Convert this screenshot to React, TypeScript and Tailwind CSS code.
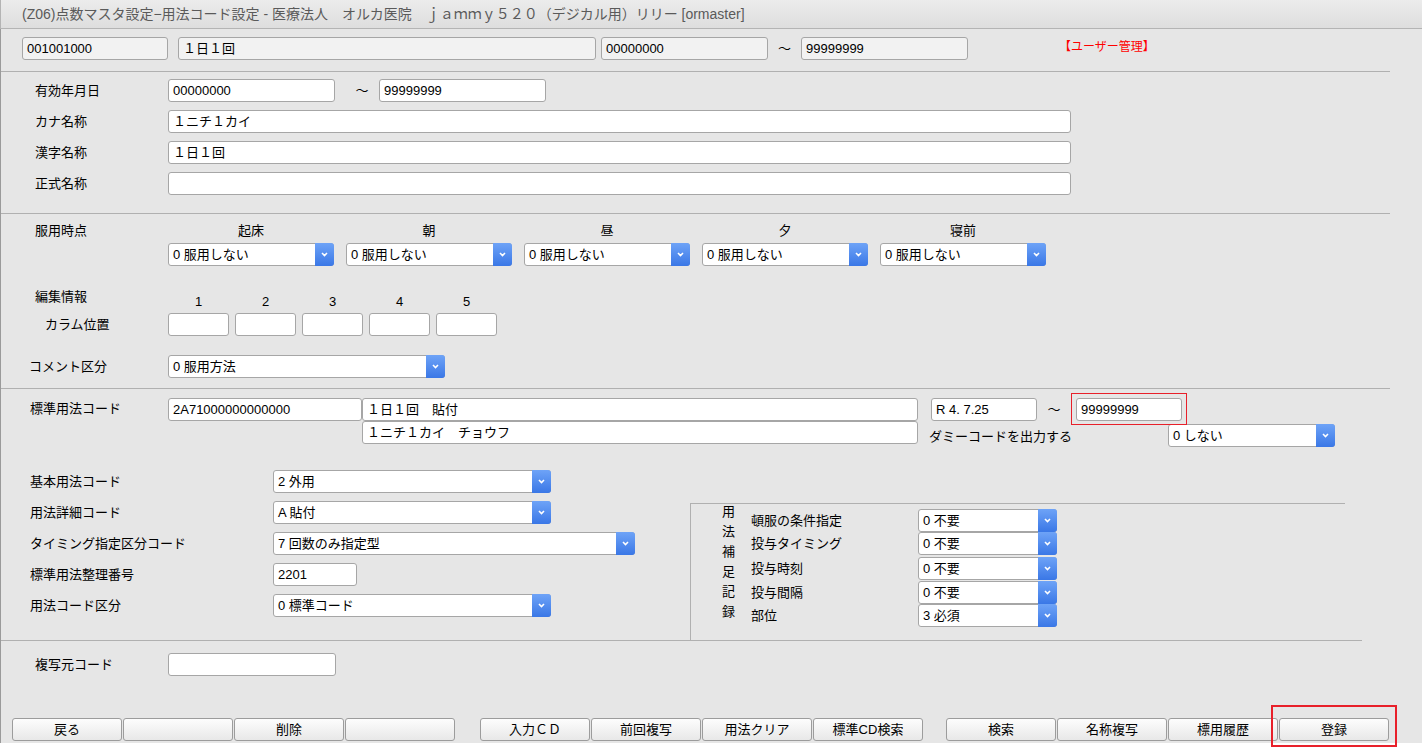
import React from 'react';

const FONT = "font-['Liberation_Sans','Noto_Sans_CJK_JP',sans-serif]";

const Box = ({ w, v = '', ro = false }: { w: string; v?: string; ro?: boolean }) => (
  <div
    className={`h-[23px] ${w} shrink-0 overflow-hidden whitespace-nowrap rounded-[3px] border border-[#a6a6a6] ${
      ro ? 'bg-[#f2f2f2]' : 'bg-white'
    } px-[4px] text-[13px] leading-[21px] text-black`}
  >
    {v}
  </div>
);

const Select = ({ w, v }: { w: string; v: string }) => (
  <div className={`flex h-[23px] ${w} shrink-0 rounded-[3px] border border-[#a6a6a6] bg-white`}>
    <div className="flex-1 overflow-hidden whitespace-nowrap px-[4px] text-[13px] leading-[21px] text-black">{v}</div>
    <div className="-my-px -mr-px flex w-[19px] items-center justify-center rounded-r-[3px] bg-linear-to-b from-[#6ea3f7] to-[#3a77e6]">
      <svg width="7" height="5" viewBox="0 0 7 5">
        <path d="M1 1l2.5 2.5L6 1" stroke="#fff" strokeWidth="1.6" fill="none" />
      </svg>
    </div>
  </div>
);

const Btn = ({ label = '' }: { label?: string }) => (
  <div className="h-[23px] w-[110px] rounded-[3px] border border-[#9c9c9c] bg-linear-to-b from-[#fdfdfd] to-[#e8e8e8] text-center text-[13px] leading-[21px] text-black">
    {label}
  </div>
);

const timings = ['起床', '朝', '昼', '夕', '寝前'];

const hoken = [
  { label: '頓服の条件指定', v: '0 不要', mt: 'mt-0' },
  { label: '投与タイミング', v: '0 不要', mt: 'mt-0' },
  { label: '投与時刻', v: '0 不要', mt: 'mt-[2px]' },
  { label: '投与間隔', v: '0 不要', mt: 'mt-[1px]' },
  { label: '部位', v: '3 必須', mt: 'mt-0' },
];

export default function App() {
  return (
    <div className={`h-[752px] w-[1422px] overflow-hidden bg-white text-[13px] text-black ${FONT}`}>
      {/* title bar */}
      <div className="h-[29px] border-b border-l border-[#b4b4b4] bg-linear-to-b from-[#ececec] to-[#dedede] pl-[21px] text-[14px] leading-[28px] text-[#5a5a5a]">
        (Z06)点数マスタ設定−用法コード設定 - 医療法人　オルカ医院　ｊａｍｍｙ５２０（デジカル用）リリー [ormaster]
      </div>

      <div className="h-[714px] border-l border-[#9a9a9a] bg-[#e6e6e6]">
        {/* header row */}
        <div className="flex h-[43px] w-[1389px] items-start border-b border-[#b0b0b0] pl-[21px] pt-[8px]">
          <Box w="w-[146px]" v="001001000" ro />
          <div className="ml-[10px]">
            <Box w="w-[418px]" v="１日１回" ro />
          </div>
          <div className="ml-[5px]">
            <Box w="w-[167px]" v="00000000" ro />
          </div>
          <span className="w-[33px] text-center leading-[23px]">～</span>
          <Box w="w-[167px]" v="99999999" ro />
          <span className="ml-[91px] text-[12px] leading-[20px] text-[#ff0000]">【ユーザー管理】</span>
        </div>

        {/* names */}
        <div className="flex h-[142px] w-[1389px] flex-col gap-[8px] border-b border-[#b0b0b0] pt-[7px]">
          <div className="flex items-center">
            <span className="w-[167px] pl-[34px]">有効年月日</span>
            <Box w="w-[167px]" v="00000000" />
            <span className="w-[44px] pl-[10px] text-center">～</span>
            <Box w="w-[167px]" v="99999999" />
          </div>
          <div className="flex items-center">
            <span className="w-[167px] pl-[34px]">カナ名称</span>
            <Box w="w-[903px]" v="１ニチ１カイ" />
          </div>
          <div className="flex items-center">
            <span className="w-[167px] pl-[34px]">漢字名称</span>
            <Box w="w-[903px]" v="１日１回" />
          </div>
          <div className="flex items-center">
            <span className="w-[167px] pl-[34px]">正式名称</span>
            <Box w="w-[903px]" />
          </div>
        </div>

        {/* timing / edit info / comment */}
        <div className="flex h-[175px] w-[1389px] flex-col border-b border-[#b0b0b0] pt-[9px]">
          <div className="flex items-start">
            <span className="w-[167px] pl-[34px] leading-[16px]">服用時点</span>
            <div className="flex gap-[12px]">
              {timings.map((t) => (
                <div key={t} className="flex w-[166px] flex-col items-center">
                  <span className="leading-[16px]">{t}</span>
                  <div className="mt-[4px] w-full">
                    <Select w="w-full" v="0 服用しない" />
                  </div>
                </div>
              ))}
            </div>
          </div>

          <div className="mt-[23px] flex items-start">
            <span className="w-[167px] pl-[34px] leading-[16px]">編集情報</span>
            <div className="flex gap-[6px] pt-[5px]">
              {[1, 2, 3, 4, 5].map((n) => (
                <span key={n} className="w-[61px] text-center leading-[16px]">
                  {n}
                </span>
              ))}
            </div>
          </div>
          <div className="mt-[3px] flex items-center">
            <span className="w-[167px] pl-[44px]">カラム位置</span>
            <div className="flex gap-[6px]">
              {[1, 2, 3, 4, 5].map((n) => (
                <Box key={n} w="w-[61px]" />
              ))}
            </div>
          </div>

          <div className="mt-[19px] flex items-center">
            <span className="w-[167px] pl-[28px]">コメント区分</span>
            <Select w="w-[277px]" v="0 服用方法" />
          </div>
        </div>

        {/* standard usage code */}
        <div className="flex h-[252px] w-[1361px] flex-col border-b border-[#b0b0b0] pt-[9px]">
          <div className="flex items-start">
            <span className="w-[167px] pl-[29px] leading-[21px]">標準用法コード</span>
            <Box w="w-[194px]" v="2A71000000000000" />
            <div className="flex w-[556px] flex-col">
              <Box w="w-full" v="１日１回　貼付" />
              <Box w="w-full" v="１ニチ１カイ　チョウフ" />
            </div>
            <div className="ml-[11px] flex flex-col">
              <div className="flex items-center">
                <div className="ml-[2px]">
                  <Box w="w-[106px]" v="R 4. 7.25" />
                </div>
                <span className="w-[34px] text-center">～</span>
                <div className="relative ml-[5px]">
                  <Box w="w-[106px]" v="99999999" />
                  <div className="absolute -top-[5px] -right-[5px] -bottom-[4px] -left-[5px] border border-[#e8202a]" />
                </div>
              </div>
              <div className="mt-[3px] flex items-center">
                <span className="w-[239px] pt-[2px]">ダミーコードを出力する</span>
                <Select w="w-[167px]" v="0 しない" />
              </div>
            </div>
          </div>

          <div className="mt-[23px] flex items-start">
            <div className="flex w-[689px] flex-col gap-[8px]">
              <div className="flex items-center">
                <span className="w-[272px] pl-[29px]">基本用法コード</span>
                <Select w="w-[278px]" v="2 外用" />
              </div>
              <div className="flex items-center">
                <span className="w-[272px] pl-[29px]">用法詳細コード</span>
                <Select w="w-[278px]" v="A 貼付" />
              </div>
              <div className="flex items-center">
                <span className="w-[272px] pl-[29px]">タイミング指定区分コード</span>
                <Select w="w-[362px]" v="7 回数のみ指定型" />
              </div>
              <div className="flex items-center">
                <span className="w-[272px] pl-[29px]">標準用法整理番号</span>
                <Box w="w-[84px]" v="2201" />
              </div>
              <div className="flex items-center">
                <span className="w-[272px] pl-[29px]">用法コード区分</span>
                <Select w="w-[278px]" v="0 標準コード" />
              </div>
            </div>

            <div className="mt-[33px] flex h-[137px] w-[655px] border-t border-l border-[#b0b0b0]">
              <div className="-mt-[2px] flex w-[60px] flex-col pl-[31px] leading-[20px]">
                {['用', '法', '補', '足', '記', '録'].map((c) => (
                  <span key={c}>{c}</span>
                ))}
              </div>
              <div className="flex flex-col pt-[5px]">
                {hoken.map((h) => (
                  <div key={h.label} className={`flex h-[23px] items-center ${h.mt}`}>
                    <span className="w-[167px]">{h.label}</span>
                    <Select w="w-[139px]" v={h.v} />
                  </div>
                ))}
              </div>
            </div>
          </div>
        </div>

        {/* copy source + function keys */}
        <div className="flex h-[102px] flex-col pt-[12px]">
          <div className="flex items-center">
            <span className="w-[167px] pl-[34px]">複写元コード</span>
            <Box w="w-[168px]" />
          </div>
          <div className="mt-[42px] flex pl-[11px]">
            <div className="flex gap-[1px]">
              <Btn label="戻る" />
              <Btn />
              <Btn label="削除" />
              <Btn />
            </div>
            <div className="ml-[25px] flex gap-[1px]">
              <Btn label="入力ＣＤ" />
              <Btn label="前回複写" />
              <Btn label="用法クリア" />
              <Btn label="標準CD検索" />
            </div>
            <div className="ml-[23px] flex gap-[1px]">
              <Btn label="検索" />
              <Btn label="名称複写" />
              <Btn label="標用履歴" />
              <div className="relative">
                <Btn label="登録" />
                <div className="absolute -top-[13px] -right-[8px] -bottom-[6px] -left-[8px] border-2 border-[#e8202a]" />
              </div>
            </div>
          </div>
        </div>
      </div>
    </div>
  );
}
